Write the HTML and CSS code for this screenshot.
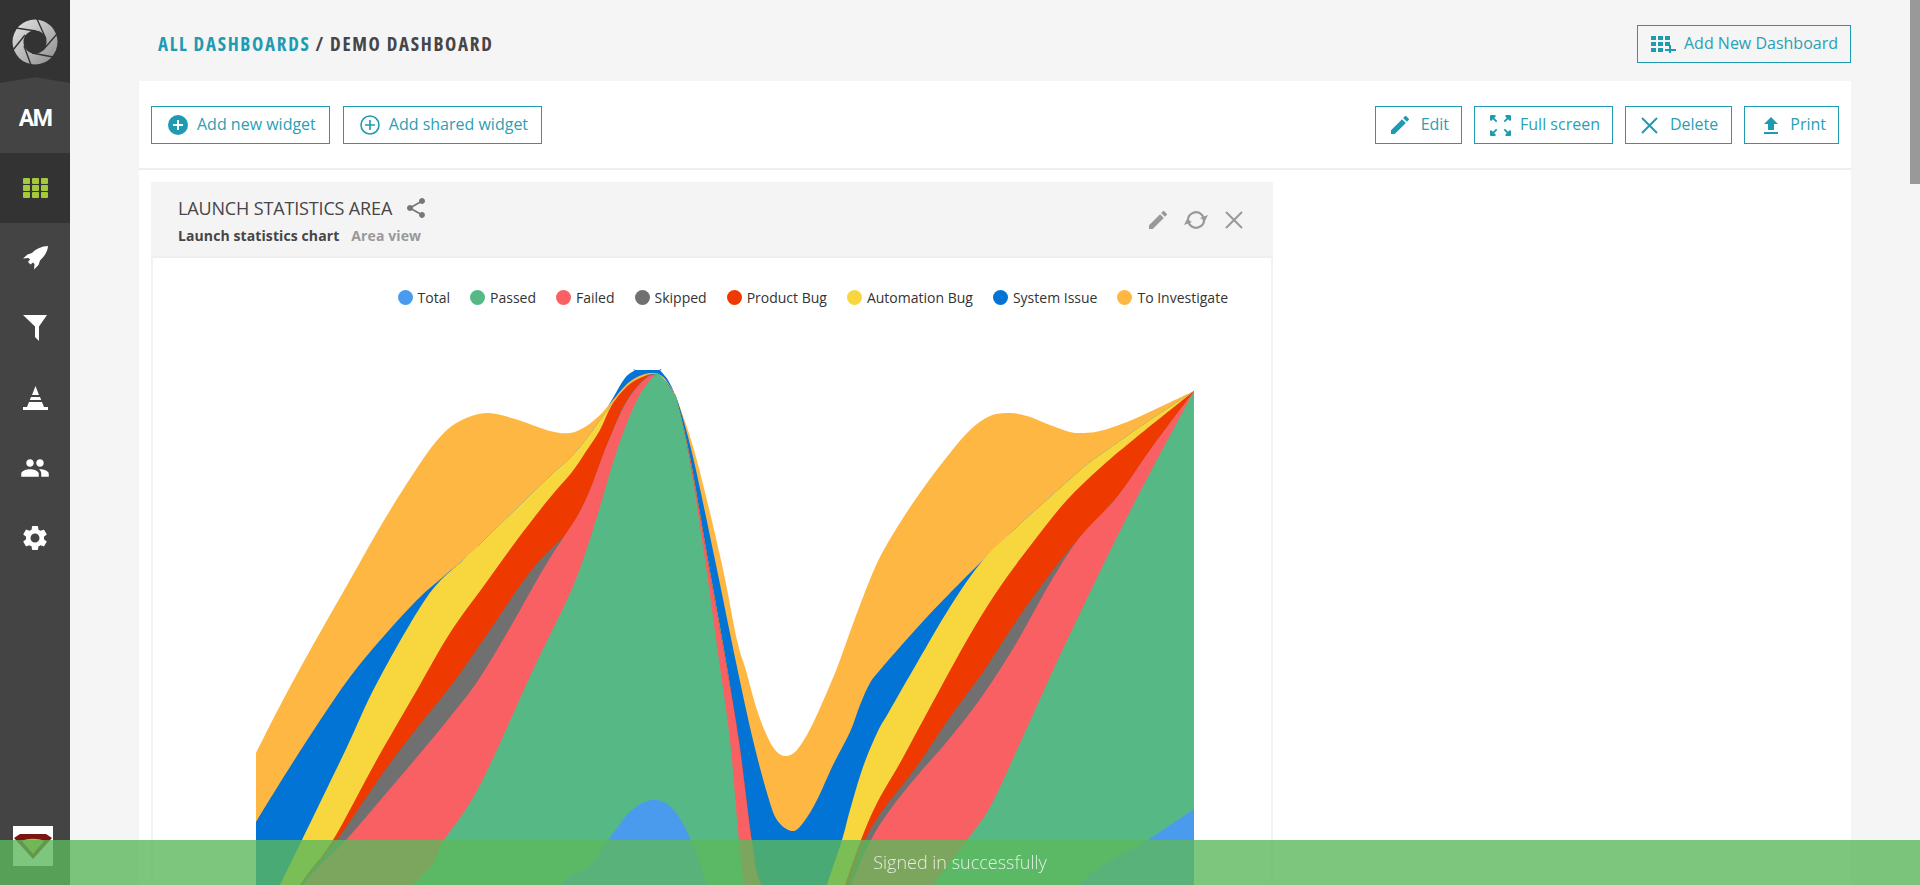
FILE: index.html
```html
<!DOCTYPE html>
<html lang="en">
<head>
    <meta charset="UTF-8">
    <meta name="viewport" content="width=device-width, initial-scale=1.0">
    <title>Demo Dashboard</title>
    <link rel="stylesheet" href="styles.css">
</head>
<body>
    <div class="app">
        <aside class="sidebar">
            <div class="logo">
                <svg width="46" height="46" viewBox="0 0 46 46">
                    <defs>
                        <linearGradient id="logoFill" x1="0" y1="0" x2="1" y2="1">
                            <stop offset="0" stop-color="#e6e6e6"/>
                            <stop offset="1" stop-color="#8c8c8c"/>
                        </linearGradient>
                    </defs>
                    <circle cx="23" cy="23" r="22.5" fill="url(#logoFill)"/>
                    <circle cx="23" cy="23" r="11.5" fill="#333"/>
                    <g stroke="#333" stroke-width="1.4">
                        <line x1="34" y1="20" x2="25" y2="0"/>
                        <line x1="31" y1="31" x2="45" y2="15"/>
                        <line x1="20" y1="34" x2="41" y2="38"/>
                        <line x1="12" y1="27" x2="19" y2="46"/>
                        <line x1="13" y1="16" x2="1" y2="31"/>
                        <line x1="24" y1="12" x2="4" y2="9"/>
                    </g>
                </svg>
            </div>
            <div class="nav-item user-initials">AM</div>
            <div class="nav-item active">
                <svg width="25" height="20" viewBox="0 0 25 20" fill="#a4c93a">
                    <rect width="7" height="6" rx="1"/><rect x="9" width="7" height="6" rx="1"/><rect x="18" width="7" height="6" rx="1"/>
                    <rect y="7" width="7" height="6" rx="1"/><rect x="9" y="7" width="7" height="6" rx="1"/><rect x="18" y="7" width="7" height="6" rx="1"/>
                    <rect y="14" width="7" height="6" rx="1"/><rect x="9" y="14" width="7" height="6" rx="1"/><rect x="18" y="14" width="7" height="6" rx="1"/>
                </svg>
            </div>
            <div class="nav-item">
                <svg width="25" height="24" viewBox="0 0 25 24" fill="#fff"><path d="M25 0C19 .3 13 2.500 9 7L4.500 8.500 0 12.500l5.500-.5L7 13.500 5 16l2.500 2.500 2.500-2L11.500 18 11 23.500l4.500-4.500 1.500-4.500C22 10 24.700 5 25 0z"/></svg>
            </div>
            <div class="nav-item">
                <svg width="24" height="26" viewBox="0 0 24 26" fill="#fff"><path d="M0 0h24l-8 11.500V26l-4-4V11.500z"/></svg>
            </div>
            <div class="nav-item">
                <svg width="25" height="24" viewBox="0 0 25 24" fill="#fff"><path d="M12.500 0L16 9H9zM8 11h9l1.200 3H6.800zM6 16h13l2 5h4v3H0v-3h4z"/></svg>
            </div>
            <div class="nav-item">
                <svg width="30" height="30" viewBox="0 0 24 24" fill="#fff"><path d="M16 11c1.660 0 2.990-1.340 2.990-3S17.660 5 16 5c-1.660 0-3 1.340-3 3s1.340 3 3 3zm-8 0c1.660 0 2.990-1.340 2.990-3S9.660 5 8 5C6.340 5 5 6.340 5 8s1.340 3 3 3zm0 2c-2.330 0-7 1.170-7 3.500V19h14v-2.500c0-2.330-4.670-3.500-7-3.500zm8 0c-.29 0-.62.02-.97.05 1.160.84 1.970 1.970 1.970 3.450V19h6v-2.500c0-2.330-4.670-3.500-7-3.500z"/></svg>
            </div>
            <div class="nav-item">
                <svg width="30" height="30" viewBox="0 0 24 24" fill="#fff"><path d="M19.140 12.940c.04-.3.06-.61.06-.94 0-.32-.02-.64-.07-.94l2.030-1.580c.18-.14.23-.41.12-.61l-1.920-3.320c-.12-.22-.37-.29-.59-.22l-2.390.96c-.5-.38-1.030-.7-1.620-.94l-.36-2.540c-.04-.24-.24-.41-.48-.41h-3.840c-.24 0-.43.17-.47.41l-.36 2.540c-.59.24-1.130.57-1.620.94l-2.390-.96c-.22-.08-.47 0-.59.22L2.740 8.870c-.12.21-.08.47.12.61l2.030 1.580c-.05.3-.09.63-.09.94s.02.64.07.94l-2.030 1.580c-.18.14-.23.41-.12.61l1.920 3.320c.12.22.37.29.59.22l2.390-.96c.5.38 1.030.7 1.620.94l.36 2.540c.05.24.24.41.48.41h3.840c.24 0 .44-.17.47-.41l.36-2.540c.59-.24 1.130-.56 1.620-.94l2.390.96c.22.08.47 0 .59-.22l1.920-3.320c.12-.22.07-.47-.12-.61l-2.010-1.580zM12 15.600c-1.980 0-3.600-1.620-3.600-3.600s1.620-3.600 3.600-3.600 3.600 1.620 3.600 3.600-1.620 3.600-3.600 3.600z"/></svg>
            </div>
            <div class="avatar">
                <svg width="40" height="40" viewBox="0 0 40 40">
                    <rect width="40" height="40" fill="#fff"/>
                    <path d="M1 12l6-4h26l6 4-19 21z" fill="#7c1414"/>
                    <path d="M9 15c5-3 17-3 22 0l-11 13z" fill="#c9b53a"/>
                </svg>
            </div>
        </aside>

        <main class="content">
            <header class="page-header">
                <div class="breadcrumb"><span class="crumb-link">ALL DASHBOARDS</span> / DEMO DASHBOARD</div>
                <button class="btn btn-dashboard">
                    <svg width="26" height="17" viewBox="0 0 26 17" fill="#1f9bb1">
                        <rect width="5" height="4"/><rect x="7" width="5" height="4"/><rect x="14" width="5" height="4"/>
                        <rect y="6" width="5" height="4"/><rect x="7" y="6" width="5" height="4"/><rect x="14" y="6" width="5" height="4"/>
                        <rect y="12" width="5" height="4"/><rect x="7" y="12" width="5" height="4"/>
                        <path d="M18 9h2v4h5v2h-5v2h-2v-2h-4v-2h4z"/>
                    </svg>
                    Add New Dashboard
                </button>
            </header>

            <section class="panel">
                <div class="toolbar">
                    <div class="toolbar-group group-left">
                        <button class="btn btn-add">
                            <svg width="20" height="20" viewBox="0 0 20 20"><circle cx="10" cy="10" r="10" fill="#1f9bb1"/><path d="M10 5v10M5 10h10" stroke="#fff" stroke-width="2"/></svg>
                            Add new widget
                        </button>
                        <button class="btn btn-add">
                            <svg width="20" height="20" viewBox="0 0 20 20" fill="none" stroke="#1f9bb1" stroke-width="1.600"><circle cx="10" cy="10" r="9"/><path d="M10 5v10M5 10h10"/></svg>
                            Add shared widget
                        </button>
                    </div>
                    <div class="toolbar-group">
                        <button class="btn">
                            <svg width="18" height="18" viewBox="3 3 18 18" fill="#1f9bb1"><path d="M3 17.250V21h3.750L17.810 9.940l-3.750-3.750L3 17.250zM20.710 7.040c.39-.39.39-1.020 0-1.410l-2.340-2.340c-.39-.39-1.020-.39-1.410 0l-1.830 1.830 3.750 3.750 1.830-1.830z"/></svg>
                            Edit
                        </button>
                        <button class="btn btn-full">
                            <svg width="21" height="21" viewBox="0 0 22 22" fill="#1f9bb1" stroke="#1f9bb1" stroke-width="2">
                                <path d="M1 1h4L1 5zM2 2l5 5" stroke-linejoin="round"/>
                                <path d="M21 1h-4l4 4zM20 2l-5 5" stroke-linejoin="round"/>
                                <path d="M1 21h4l-4-4zM2 20l5-5" stroke-linejoin="round"/>
                                <path d="M21 21h-4l4-4zM20 20l-5-5" stroke-linejoin="round"/>
                            </svg>
                            Full screen
                        </button>
                        <button class="btn btn-delete">
                            <svg width="17" height="17" viewBox="0 0 17 17" stroke="#1f9bb1" stroke-width="2"><path d="M1 1l15 15M16 1L1 16"/></svg>
                            Delete
                        </button>
                        <button class="btn btn-print">
                            <svg width="14" height="17" viewBox="5 3 14 17" fill="#1f9bb1"><path d="M9 16h6v-6h4l-7-7-7 7h4zm-4 2h14v2H5z"/></svg>
                            Print
                        </button>
                    </div>
                </div>

                <div class="widget-grid">
                    <article class="widget">
                        <div class="widget-head">
                            <div>
                                <div class="widget-title">
                                    LAUNCH STATISTICS AREA
                                    <svg width="24" height="24" viewBox="0 0 24 24" fill="#777"><path d="M18 16.080c-.76 0-1.440.3-1.960.77L8.910 12.700c.05-.23.09-.46.09-.7s-.04-.47-.09-.7l7.050-4.110c.54.5 1.250.81 2.040.81 1.660 0 3-1.340 3-3s-1.340-3-3-3-3 1.340-3 3c0 .24.04.47.09.7L8.040 9.810C7.500 9.310 6.790 9 6 9c-1.660 0-3 1.340-3 3s1.340 3 3 3c.79 0 1.500-.31 2.040-.81l7.120 4.160c-.05.21-.08.43-.08.650 0 1.610 1.310 2.920 2.920 2.920 1.610 0 2.920-1.310 2.920-2.920s-1.310-2.920-2.920-2.920z"/></svg>
                                </div>
                                <div class="widget-sub"><b>Launch statistics chart</b><span>Area view</span></div>
                            </div>
                            <div class="widget-actions">
                                <svg width="18" height="18" viewBox="3 3 18 18" fill="#999"><path d="M3 17.250V21h3.750L17.810 9.940l-3.750-3.750L3 17.250zM20.710 7.040c.39-.39.39-1.020 0-1.410l-2.340-2.340c-.39-.39-1.020-.39-1.410 0l-1.830 1.830 3.750 3.750 1.830-1.830z"/></svg>
                                <svg width="24" height="20" viewBox="0 0 24 20" fill="none" stroke="#999" stroke-width="2.200">
                                    <path d="M4 11a8 8 0 0 1 14-6l2 3"/>
                                    <path d="M20 9a8 8 0 0 1-14 6l-2-3"/>
                                    <path d="M24 5l-3 6-5-3z" fill="#999" stroke="none"/>
                                    <path d="M0 15l3-6 5 3z" fill="#999" stroke="none"/>
                                </svg>
                                <svg width="18" height="18" viewBox="0 0 18 18" stroke="#999" stroke-width="2"><path d="M1 1l16 16M17 1L1 17"/></svg>
                            </div>
                        </div>
                        <div class="widget-body">
                            <ul class="legend">
                                <li><i class="dot c-total"></i>Total</li>
                                <li><i class="dot c-passed"></i>Passed</li>
                                <li><i class="dot c-failed"></i>Failed</li>
                                <li><i class="dot c-skipped"></i>Skipped</li>
                                <li><i class="dot c-product"></i>Product Bug</li>
                                <li><i class="dot c-auto"></i>Automation Bug</li>
                                <li><i class="dot c-system"></i>System Issue</li>
                                <li><i class="dot c-invest"></i>To Investigate</li>
                            </ul>
                            <svg id="chart" class="chart" width="939" height="600" viewBox="256 360 939 600"></svg>
                        </div>
                    </article>
                </div>
            </section>
        </main>
    </div>

    <div class="scroll-thumb"></div>
    <div class="notification">Signed in successfully</div>

    <script src="chart.js"></script>
</body>
</html>
```

FILE: styles.css
```css
* {
    box-sizing: border-box;
}

html, body {
    height: 100%;
    margin: 0;
    overflow: hidden;
}

body {
    font-family: "Open Sans", Arial, sans-serif;
    background-color: #f5f5f5;
    color: #464547;
}

.app {
    display: flex;
    height: 100vh;
    overflow: hidden;
}

/* left rail */
.sidebar {
    width: 70px;
    flex-shrink: 0;
    background-color: #444;
    display: flex;
    flex-direction: column;
}

.logo {
    height: 83px;
    background-color: #333;
    clip-path: polygon(0 0, 100% 0, 100% 100%, 50% 93%, 0 100%);
    display: flex;
    justify-content: center;
    padding-top: 19px;
}

.nav-item {
    height: 70px;
    display: flex;
    align-items: center;
    justify-content: center;
}

.nav-item.active {
    background-color: #333;
}

.user-initials {
    color: #fff;
    font-family: Roboto, Arial, sans-serif;
    font-weight: 700;
    font-size: 23px;
    letter-spacing: -1.5px;
}

.avatar {
    margin: auto 0 19px 13px;
    height: 40px;
}

/* top line */
.content {
    flex: 1;
    padding: 0 69px;
    min-width: 0;
}

.page-header {
    height: 81px;
    padding: 25px 0 0 19px;
    display: flex;
    justify-content: space-between;
    align-items: flex-start;
}

.breadcrumb {
    font-size: 19px;
    font-weight: 700;
    font-stretch: condensed;
    letter-spacing: 1.7px;
    line-height: 38px;
}

.crumb-link {
    color: #1f9bb1;
}

.btn {
    height: 38px;
    display: inline-flex;
    align-items: center;
    gap: 12px;
    padding: 0 12px 2px 15px;
    background-color: transparent;
    border: 1px solid #1f9bb1;
    color: #2a9fb5;
    font-family: inherit;
    font-size: 16px;
    cursor: pointer;
}

.btn svg {
    flex-shrink: 0;
    margin-top: 2px;
}

.btn-add {
    gap: 9px;
    padding: 0 13px 2px 16px;
}

.btn-full {
    gap: 9px;
}

.btn-delete {
    padding-right: 13px;
}

.btn-print {
    padding-left: 19px;
}

.btn-dashboard {
    gap: 7px;
    padding-left: 13px;
}

/* white panel */
.panel {
    background-color: #fff;
    height: 900px;
}

.toolbar {
    height: 89px;
    padding: 25px 12px 0;
    display: flex;
    justify-content: space-between;
    border-bottom: 2px solid #eee;
}

.toolbar-group {
    display: flex;
    gap: 12px;
}

.group-left {
    gap: 13px;
}

.widget-grid {
    padding: 12px;
}

.widget {
    width: 1122px;
    border: 2px solid #f3f3f3;
    border-top: 0;
}

.widget-head {
    height: 76px;
    margin: 0 -2px;
    padding: 11px 30px 0 27px;
    background-color: #f4f4f4;
    border-bottom: 2px solid #efefef;
    display: flex;
    justify-content: space-between;
}

.widget-title {
    display: flex;
    align-items: center;
    gap: 12px;
    font-size: 18px;
    letter-spacing: -0.15px;
    line-height: 30px;
    color: #464547;
}

.widget-sub {
    font-size: 14px;
    letter-spacing: 0.1px;
    line-height: 20px;
    margin-top: 3px;
}

.widget-sub b {
    font-weight: 700;
    margin-right: 12px;
}

.widget-sub span {
    color: #999;
    font-weight: 700;
}

.widget-actions {
    display: flex;
    align-items: center;
    gap: 17px;
    height: 54px;
}

.widget-body {
    height: 760px;
    padding-top: 29px;
}

/* legend and chart */
.legend {
    list-style-type: none;
    margin: 0;
    padding: 0 43px 0 0;
    display: flex;
    justify-content: flex-end;
    gap: 20px;
    height: 20px;
    font-size: 14px;
    color: #333;
}

.legend li {
    display: flex;
    align-items: center;
    gap: 5px;
}

.dot {
    width: 15px;
    height: 15px;
    border-radius: 50%;
}

.c-total { background-color: #4a9bee; }
.c-passed { background-color: #56b985; }
.c-failed { background-color: #f96063; }
.c-skipped { background-color: #707070; }
.c-product { background-color: #ee3900; }
.c-auto { background-color: #f7d63e; }
.c-system { background-color: #0274d6; }
.c-invest { background-color: #ffb743; }

.chart {
    display: block;
    margin: 53px 0 0 103px;
}

/* overlays */
.scroll-thumb {
    position: fixed;
    top: 0;
    right: 0;
    width: 10px;
    height: 184px;
    background-color: #999;
}

.notification {
    position: fixed;
    left: 0;
    right: 0;
    bottom: 0;
    height: 45px;
    line-height: 45px;
    text-align: center;
    background-color: rgba(92, 184, 92, 0.8);
    color: rgba(255, 255, 255, 0.8);
    font-size: 18px;
    font-weight: 300;
}
```

FILE: chart.js
```js
// stacked area chart, painted back to front: each layer fills from its upper edge down
var layers = [
    { color: "#0274d6", points: [[600,420],[613,398],[625,378],[635,370],[635,370],[660,370],[660,370],[668,380],[674,392]] },
    { color: "#ffb743", points: [[256,753],[283,700],[317,638],[350,580],[383,522],[417,468],[440,437],[460,421],[487,413],[515,419],[550,431],[570,433],[585,427],[600,415],[613,400],[628,383],[642,375],[653,373],[662,376],[670,386],[678,402],[696,457],[721,560],[737,640],[745,667],[757,710],[768,738],[777,752],[786,756],[796,751],[808,733],[820,708],[837,668],[850,632],[865,592],[880,557],[903,518],[927,483],[950,453],[970,430],[990,416],[1010,413],[1027,416],[1050,425],[1070,432],[1083,433],[1100,431],[1127,422],[1160,407],[1194,391]] },
    { color: "#0274d6", points: [[256,822],[283,778],[317,725],[350,677],[383,637],[417,600],[443,577],[463,560],[483,541],[517,508],[550,476],[570,458],[587,438],[603,416],[615,401],[630,384],[645,376],[653,374],[664,380],[672,390],[678,402],[693,457],[715,560],[737,667],[753,740],[767,793],[777,820],[792,831],[803,823],[817,800],[833,765],[850,732],[860,705],[870,683],[880,670],[900,647],[927,617],[950,593],[983,560],[1017,527],[1050,497],[1077,473],[1090,462],[1117,443],[1150,420],[1194,391]] },
    { color: "#f7d63e", points: [[256,935],[280,885],[302,840],[347,747],[377,683],[427,597],[463,560],[483,541],[517,508],[550,476],[570,458],[587,438],[603,416],[615,401],[630,384],[645,376],[653,374],[664,381],[672,391],[677,401],[690,457],[708,560],[727,667],[738,740],[751,840],[760,885],[790,925],[815,925],[827,885],[842,840],[850,810],[863,767],[877,733],[890,710],[917,663],[950,607],[983,560],[1017,527],[1050,497],[1077,473],[1090,462],[1117,443],[1150,420],[1194,391]] },
    { color: "#ee3900", points: [[256,960],[300,885],[333,840],[375,763],[417,690],[450,633],[483,587],[517,540],[548,500],[572,472],[587,450],[600,430],[612,405],[630,384],[653,374],[664,382],[672,392],[677,402],[690,458],[708,561],[727,668],[739,740],[752,840],[762,885],[800,940],[830,930],[845,885],[861,840],[877,803],[900,763],[927,713],[967,640],[1000,587],[1037,537],[1067,500],[1100,468],[1133,440],[1194,391]] },
    { color: "#707070", points: [[256,960],[301,885],[337,840],[383,773],[417,728],[453,683],[488,633],[517,590],[540,560],[565,535],[578,515],[590,490],[603,455],[617,420],[627,400],[640,383],[653,374],[664,383],[672,393],[677,403],[690,459],[708,562],[727,669],[739,741],[752,841],[762,886],[800,945],[830,935],[848,885],[865,840],[883,810],[917,766],[950,717],[983,672],[1017,620],[1050,574],[1080,537],[1117,497],[1150,450],[1194,391]] },
    { color: "#f96063", points: [[256,960],[303,885],[346,840],[383,797],[417,757],[450,717],[477,682],[507,633],[533,587],[550,558],[565,535],[578,515],[590,490],[603,455],[617,421],[627,401],[640,384],[653,375],[664,384],[672,394],[677,404],[690,460],[708,563],[727,670],[739,742],[752,842],[762,887],[800,950],[830,940],[851,885],[871,840],[890,810],[917,776],[950,738],[983,695],[1017,642],[1050,583],[1080,537],[1117,497],[1150,450],[1194,391]] },
    { color: "#56b985", points: [[256,1000],[412,885],[444,840],[480,785],[533,670],[567,600],[583,560],[600,507],[617,450],[637,400],[653,377],[660,375],[673,393],[677,401],[689,457],[705,560],[720,667],[730,740],[739,840],[745,885],[760,930],[900,930],[933,885],[967,840],[990,807],[1017,750],[1050,677],[1083,607],[1117,537],[1150,473],[1194,391]] },
    { color: "#4a9bee", points: [[256,960],[540,950],[562,885],[590,865],[612,835],[632,810],[653,800],[672,808],[690,838],[706,885],[720,960],[1060,960],[1080,885],[1148,840],[1194,809]] }
];

var bottom = 960;

// catmull-rom through the traced points
function smooth(points) {
    var d = "M" + points[0][0] + " " + points[0][1];
    for (var i = 0; i < points.length - 1; i++) {
        var p0 = points[i - 1] || points[i];
        var p1 = points[i];
        var p2 = points[i + 1];
        var p3 = points[i + 2] || p2;
        var c1x = p1[0] + (p2[0] - p0[0]) / 6;
        var c1y = p1[1] + (p2[1] - p0[1]) / 6;
        var c2x = p2[0] - (p3[0] - p1[0]) / 6;
        var c2y = p2[1] - (p3[1] - p1[1]) / 6;
        d += "C" + c1x + " " + c1y + " " + c2x + " " + c2y + " " + p2[0] + " " + p2[1];
    }
    return d;
}

var chart = document.getElementById("chart");

layers.forEach(function(layer) {
    var first = layer.points[0];
    var last = layer.points[layer.points.length - 1];
    var path = document.createElementNS("http://www.w3.org/2000/svg", "path");
    path.setAttribute("d", smooth(layer.points) + "L" + last[0] + " " + bottom + "L" + first[0] + " " + bottom + "Z");
    path.setAttribute("fill", layer.color);
    chart.appendChild(path);
});
```
